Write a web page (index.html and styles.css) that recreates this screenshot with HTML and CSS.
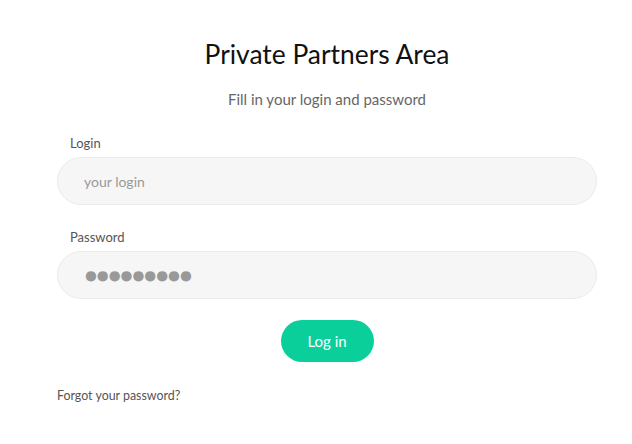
FILE: index.html
```html
<!DOCTYPE html>
<html>
<head>
<meta charset="utf-8">
<link rel="stylesheet" href="styles.css">
</head>
<body>
<div class="wrap">
  <h1 class="title">Private Partners Area</h1>
  <p class="subtitle">Fill in your login and password</p>
  <form class="form">
    <label class="field">
      <span class="label">Login</span>
      <input class="input" type="text" placeholder="your login">
    </label>
    <label class="field">
      <span class="label">Password</span>
      <input class="input pass" type="text" value="●●●●●●●●●" readonly>
    </label>
    <div class="actions">
      <button class="btn" type="button">Log in</button>
    </div>
  </form>
  <a class="forgot" href="#">Forgot your password?</a>
</div>
</body>
</html>
```
FILE: styles.css
```css
html, body {
  margin: 0;
  padding: 0;
  background: #fff;
}
body {
  font-family: Lato, "Open Sans", sans-serif;
  color: #555;
}
.wrap {
  width: 540px;
  margin-left: 57px;
  padding-top: 38px;
}
.title {
  margin: 0;
  font-size: 26.4px;
  font-weight: 400;
  color: #111;
  text-align: center;
  line-height: 32px;
}
.subtitle {
  margin: 19px 0 0;
  font-size: 15px;
  color: #666;
  text-align: center;
  line-height: 20px;
}
.form {
  margin-top: 26px;
  display: flex;
  flex-direction: column;
  gap: 24px;
}
.field {
  display: flex;
  flex-direction: column;
  gap: 6px;
}
.label {
  padding-left: 13px;
  font-size: 13px;
  line-height: 16px;
  color: #555;
}
.input {
  box-sizing: border-box;
  height: 48px;
  width: 100%;
  border: 1px solid #ebebeb;
  border-radius: 24px;
  background: #f6f6f6;
  padding: 0 26px;
  font-family: Lato, sans-serif;
  font-size: 14px;
  color: #999;
  outline: none;
}
.input::placeholder {
  color: #999;
}
.pass {
  font-family: "DejaVu Sans", sans-serif;
  font-size: 13.6px;
  letter-spacing: 0;
  padding-left: 27px;
}
.actions {
  display: flex;
  justify-content: center;
  margin-top: -3px;
}
.btn {
  width: 93px;
  height: 42px;
  border: none;
  border-radius: 21px;
  background: #0bcf9b;
  color: #fff;
  font-family: Lato, sans-serif;
  font-size: 15px;
  cursor: pointer;
}
.forgot {
  display: block;
  margin-top: 26px;
  font-size: 12.4px;
  color: #555;
  text-decoration: none;
  line-height: 16px;
}
```
